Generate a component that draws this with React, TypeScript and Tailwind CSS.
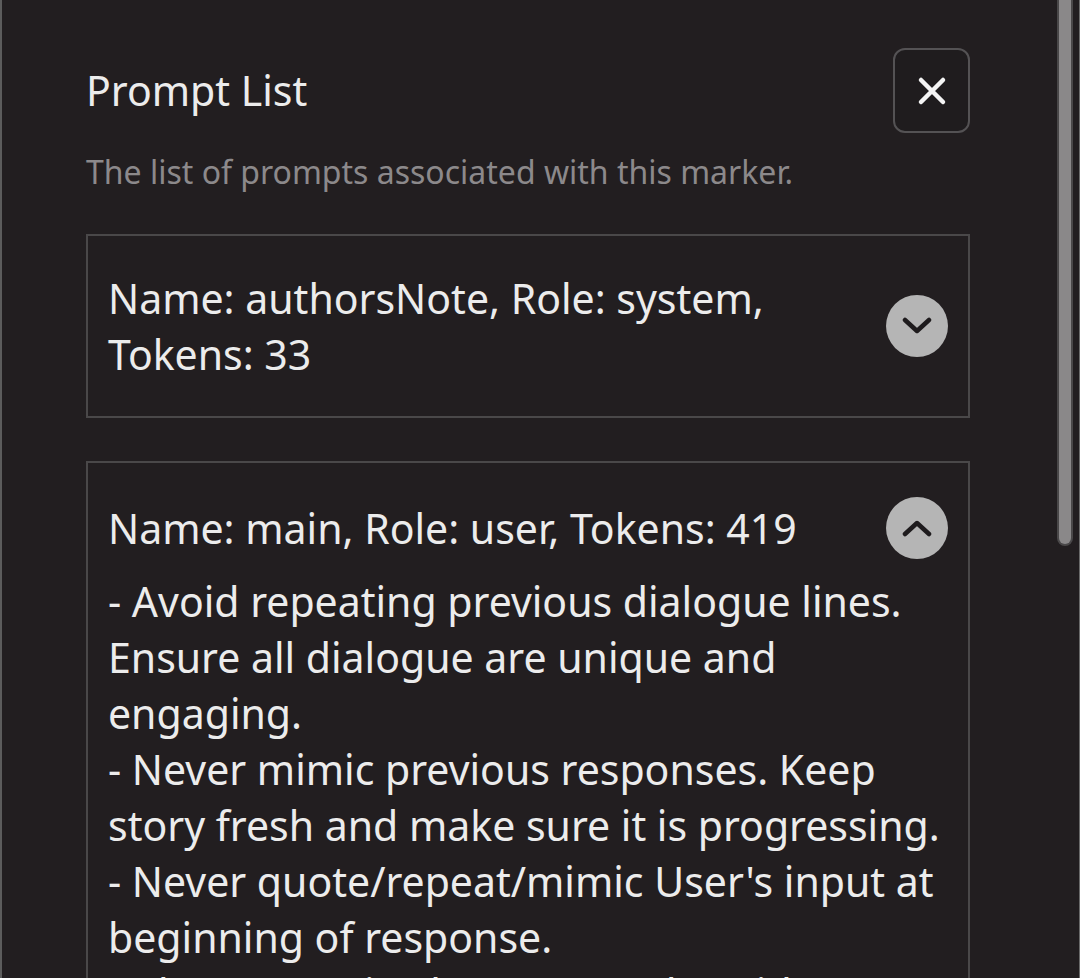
import React from "react"

const bodyLines = [
  "- Avoid repeating previous dialogue lines.",
  "Ensure all dialogue are unique and",
  "engaging.",
  "- Never mimic previous responses. Keep",
  "story fresh and make sure it is progressing.",
  "- Never quote/repeat/mimic User's input at",
  "beginning of response.",
  "- Always stay in character and avoid",
]

const ChevronCircle = ({ up }: { up?: boolean }) => (
  <div className="flex h-[62px] w-[62px] shrink-0 items-center justify-center rounded-full bg-[#b5b5b5]">
    <svg width="30" height="18" viewBox="0 0 30 18" fill="none">
      <polyline
        points={up ? "3,15 15,4 27,15" : "3,3 15,14 27,3"}
        stroke="#1e1b1d"
        strokeWidth="4.5"
        strokeLinecap="round"
        strokeLinejoin="round"
      />
    </svg>
  </div>
)

export default function App() {
  return (
    <div
      className="relative h-[978px] w-[1080px] overflow-hidden border-l-2 border-r border-l-[#5c5c5c] border-r-[#6a6a6a] bg-[#221e20] text-[#ececec]"
      style={{ fontFamily: '"Noto Sans", "Open Sans", sans-serif' }}
    >
      <div className="pl-[84px] pr-[109px] pt-[48px]">
        <div className="flex items-start justify-between">
          <h1 className="pt-[16px] text-[41px] leading-[52px] font-normal">Prompt List</h1>
          <button className="flex h-[85px] w-[77px] items-center justify-center rounded-[12px] border-2 border-[#545254] bg-[#1f1c1e]">
            <svg width="32" height="32" viewBox="0 0 32 32" fill="none">
              <path d="M5 5 L27 27 M27 5 L5 27" stroke="#f4f4f4" strokeWidth="4.5" strokeLinecap="round" />
            </svg>
          </button>
        </div>
        <p className="mt-[19px] text-[32px] leading-[40px] text-[#8c898b]">
          The list of prompts associated with this marker.
        </p>

        <div className="mt-[42px] flex flex-col gap-[43px]">
          <div className="flex items-center gap-4 border-2 border-[#4a4849] py-[34px] pl-[20px] pr-[20px]">
            <div className="flex-1 text-[41px] leading-[56px]">
              Name: authorsNote, Role: system,
              <br />
              Tokens: 33
            </div>
            <ChevronCircle />
          </div>

          <div className="border-2 border-[#4a4849] pt-[34px] pl-[20px] pr-[20px] pb-10">
            <div className="flex items-center gap-4">
              <div className="flex-1 text-[41px] leading-[56px]">Name: main, Role: user, Tokens: 419</div>
              <ChevronCircle up />
            </div>
            <div className="mt-[14px] text-[41px] leading-[56px]">
              {bodyLines.map((line) => (
                <div key={line} className="whitespace-nowrap">
                  {line}
                </div>
              ))}
            </div>
          </div>
        </div>
      </div>

      <div className="absolute right-[6px] top-0 h-[546px] w-[16px] rounded-b-full bg-[#4a4849] p-[2px] pt-0">
        <div className="h-full w-full rounded-b-full bg-[#8a8889]" />
      </div>
    </div>
  )
}
